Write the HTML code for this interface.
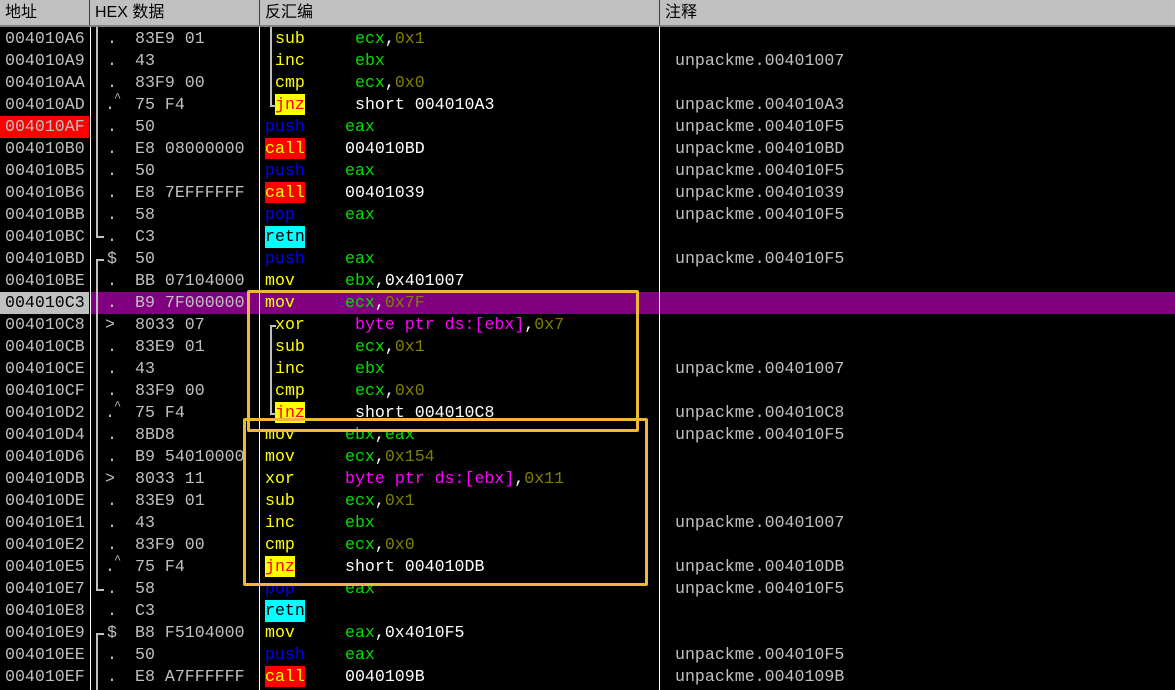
<!DOCTYPE html><html><head><meta charset="utf-8"><style>
body{margin:0;width:1175px;height:690px;background:#000;overflow:hidden;position:relative;font-family:"Liberation Mono","Noto Sans CJK SC",monospace;font-size:16.6px;}
.h{position:absolute;top:0;left:0;width:1175px;height:25px;background:#c0c0c0;border-bottom:2px solid #808080;color:#000;font-family:"Liberation Sans","Noto Sans CJK SC",sans-serif;font-size:16px;line-height:26px}
.h span{position:absolute;top:0}
.v{position:absolute;width:2px;background:#fff}
.r{position:absolute;left:0;width:1175px;height:22px;line-height:22px;white-space:pre}
.r>span{position:absolute;top:0}
.r span span{position:static}
.a{color:#c0c0c0}
.y{color:#ff0}.g{color:#00e000}.o{color:#808000}.w{color:#fff}.b{color:#0000ff}.m{color:#ff00ff}
.jz{color:#f00;background:#ff0;height:21px}
.cl{color:#ff0;background:#f00;height:21px}
.rt{color:#000;background:#0ff;height:22px}
.ln{position:absolute;background:#c0c0c0}
.box{position:absolute;border:3px solid #f0b838;border-radius:2px}
</style></head><body>
<div class="h"><span style="left:5px">地址</span><span style="left:95px">HEX 数据</span><span style="left:265px">反汇编</span><span style="left:665px">注释</span>
<div style="position:absolute;left:89px;top:0;width:1px;height:25px;background:#404040"></div>
<div style="position:absolute;left:259px;top:0;width:1px;height:25px;background:#404040"></div>
<div style="position:absolute;left:659px;top:0;width:1px;height:25px;background:#404040"></div></div>
<div id="rows"></div>
<div class="v" style="left:90px;top:27px;height:663px;width:1px"></div>
<div class="v" style="left:259px;top:27px;height:663px;width:1px"></div>
<div class="v" style="left:659px;top:27px;height:663px;width:1px"></div>
<div class="ln" style="left:96px;top:27px;width:2px;height:210px"></div>
<div class="ln" style="left:96px;top:236px;width:8px;height:2px"></div>
<div class="ln" style="left:96px;top:259px;width:8px;height:2px"></div>
<div class="ln" style="left:96px;top:259px;width:2px;height:331px"></div>
<div class="ln" style="left:96px;top:589px;width:8px;height:2px"></div>
<div class="ln" style="left:96px;top:633px;width:8px;height:2px"></div>
<div class="ln" style="left:96px;top:633px;width:2px;height:57px"></div>
<div class="ln" style="left:270px;top:27px;width:2px;height:79px"></div>
<div class="ln" style="left:270px;top:105px;width:6px;height:2px"></div>
<div class="ln" style="left:270px;top:325px;width:6px;height:2px"></div>
<div class="ln" style="left:270px;top:325px;width:2px;height:89px"></div>
<div class="ln" style="left:270px;top:413px;width:6px;height:2px"></div>
<div class="box" style="left:247px;top:290px;width:386px;height:136px"></div>
<div class="box" style="left:243px;top:418px;width:399px;height:162px"></div>
<script>
var R=[
["004010A6",".","83E9 01",1,"sub","y",'<span class="g">ecx</span><span class="w">,</span><span class="o">0x1</span>',""],
["004010A9",".","43",1,"inc","y",'<span class="g">ebx</span>',"unpackme.00401007"],
["004010AA",".","83F9 00",1,"cmp","y",'<span class="g">ecx</span><span class="w">,</span><span class="o">0x0</span>',""],
["004010AD","^","75 F4",1,"jnz","jz",'<span class="w">short 004010A3</span>',"unpackme.004010A3"],
["004010AF",".","50",0,"push","b",'<span class="g">eax</span>',"unpackme.004010F5","red"],
["004010B0",".","E8 08000000",0,"call","cl",'<span class="w">004010BD</span>',"unpackme.004010BD"],
["004010B5",".","50",0,"push","b",'<span class="g">eax</span>',"unpackme.004010F5"],
["004010B6",".","E8 7EFFFFFF",0,"call","cl",'<span class="w">00401039</span>',"unpackme.00401039"],
["004010BB",".","58",0,"pop","b",'<span class="g">eax</span>',"unpackme.004010F5"],
["004010BC",".","C3",0,"retn","rt","",""],
["004010BD","$","50",0,"push","b",'<span class="g">eax</span>',"unpackme.004010F5"],
["004010BE",".","BB 07104000",0,"mov","y",'<span class="g">ebx</span><span class="w">,0x401007</span>',""],
["004010C3",".","B9 7F000000",0,"mov","y",'<span class="g">ecx</span><span class="w">,</span><span class="o">0x7F</span>',"","hl"],
["004010C8",">","8033 07",1,"xor","y",'<span class="m">byte ptr ds:[ebx]</span><span class="w">,</span><span class="o">0x7</span>',""],
["004010CB",".","83E9 01",1,"sub","y",'<span class="g">ecx</span><span class="w">,</span><span class="o">0x1</span>',""],
["004010CE",".","43",1,"inc","y",'<span class="g">ebx</span>',"unpackme.00401007"],
["004010CF",".","83F9 00",1,"cmp","y",'<span class="g">ecx</span><span class="w">,</span><span class="o">0x0</span>',""],
["004010D2","^","75 F4",1,"jnz","jz",'<span class="w">short 004010C8</span>',"unpackme.004010C8"],
["004010D4",".","8BD8",0,"mov","y",'<span class="g">ebx</span><span class="w">,</span><span class="g">eax</span>',"unpackme.004010F5"],
["004010D6",".","B9 54010000",0,"mov","y",'<span class="g">ecx</span><span class="w">,</span><span class="o">0x154</span>',""],
["004010DB",">","8033 11",0,"xor","y",'<span class="m">byte ptr ds:[ebx]</span><span class="w">,</span><span class="o">0x11</span>',""],
["004010DE",".","83E9 01",0,"sub","y",'<span class="g">ecx</span><span class="w">,</span><span class="o">0x1</span>',""],
["004010E1",".","43",0,"inc","y",'<span class="g">ebx</span>',"unpackme.00401007"],
["004010E2",".","83F9 00",0,"cmp","y",'<span class="g">ecx</span><span class="w">,</span><span class="o">0x0</span>',""],
["004010E5","^","75 F4",0,"jnz","jz",'<span class="w">short 004010DB</span>',"unpackme.004010DB"],
["004010E7",".","58",0,"pop","b",'<span class="g">eax</span>',"unpackme.004010F5"],
["004010E8",".","C3",0,"retn","rt","",""],
["004010E9","$","B8 F5104000",0,"mov","y",'<span class="g">eax</span><span class="w">,0x4010F5</span>',""],
["004010EE",".","50",0,"push","b",'<span class="g">eax</span>',"unpackme.004010F5"],
["004010EF",".","E8 A7FFFFFF",0,"call","cl",'<span class="w">0040109B</span>',"unpackme.0040109B"]];
var h="";
R.forEach(function(r,i){var t=28+22*i;var bg="";var ac="a";
if(r[8]=="hl"){bg='<div style="position:absolute;left:0;top:0;width:89px;height:22px;background:#c0c0c0"></div><div style="position:absolute;left:91px;top:0;width:1084px;height:22px;background:#800080"></div>';ac="";}
if(r[8]=="red"){bg='<div style="position:absolute;left:0;top:0;width:89px;height:22px;background:#f00"></div>';}
var mk=r[1]=="^"?'<span class="a" style="left:105px">.</span><span class="a" style="left:114px;top:-7px;font-size:12px">^</span>':'<span class="a" style="left:'+(r[1]==">"?105:107)+'px">'+r[1]+'</span>';
var mx=r[3]?275:265,ox=r[3]?355:345;
h+='<div class="r" style="top:'+t+'px">'+bg+'<span class="'+ac+'" style="left:5px'+(ac?'':';color:#000')+'">'+r[0]+'</span>'+mk+'<span class="a" style="left:135px">'+r[2]+'</span><span class="'+r[5]+'" style="left:'+mx+'px">'+r[4]+'</span><span style="left:'+ox+'px">'+r[6]+'</span><span class="a" style="left:675px">'+r[7]+'</span></div>';});
document.getElementById("rows").innerHTML=h;
</script>
</body></html>
